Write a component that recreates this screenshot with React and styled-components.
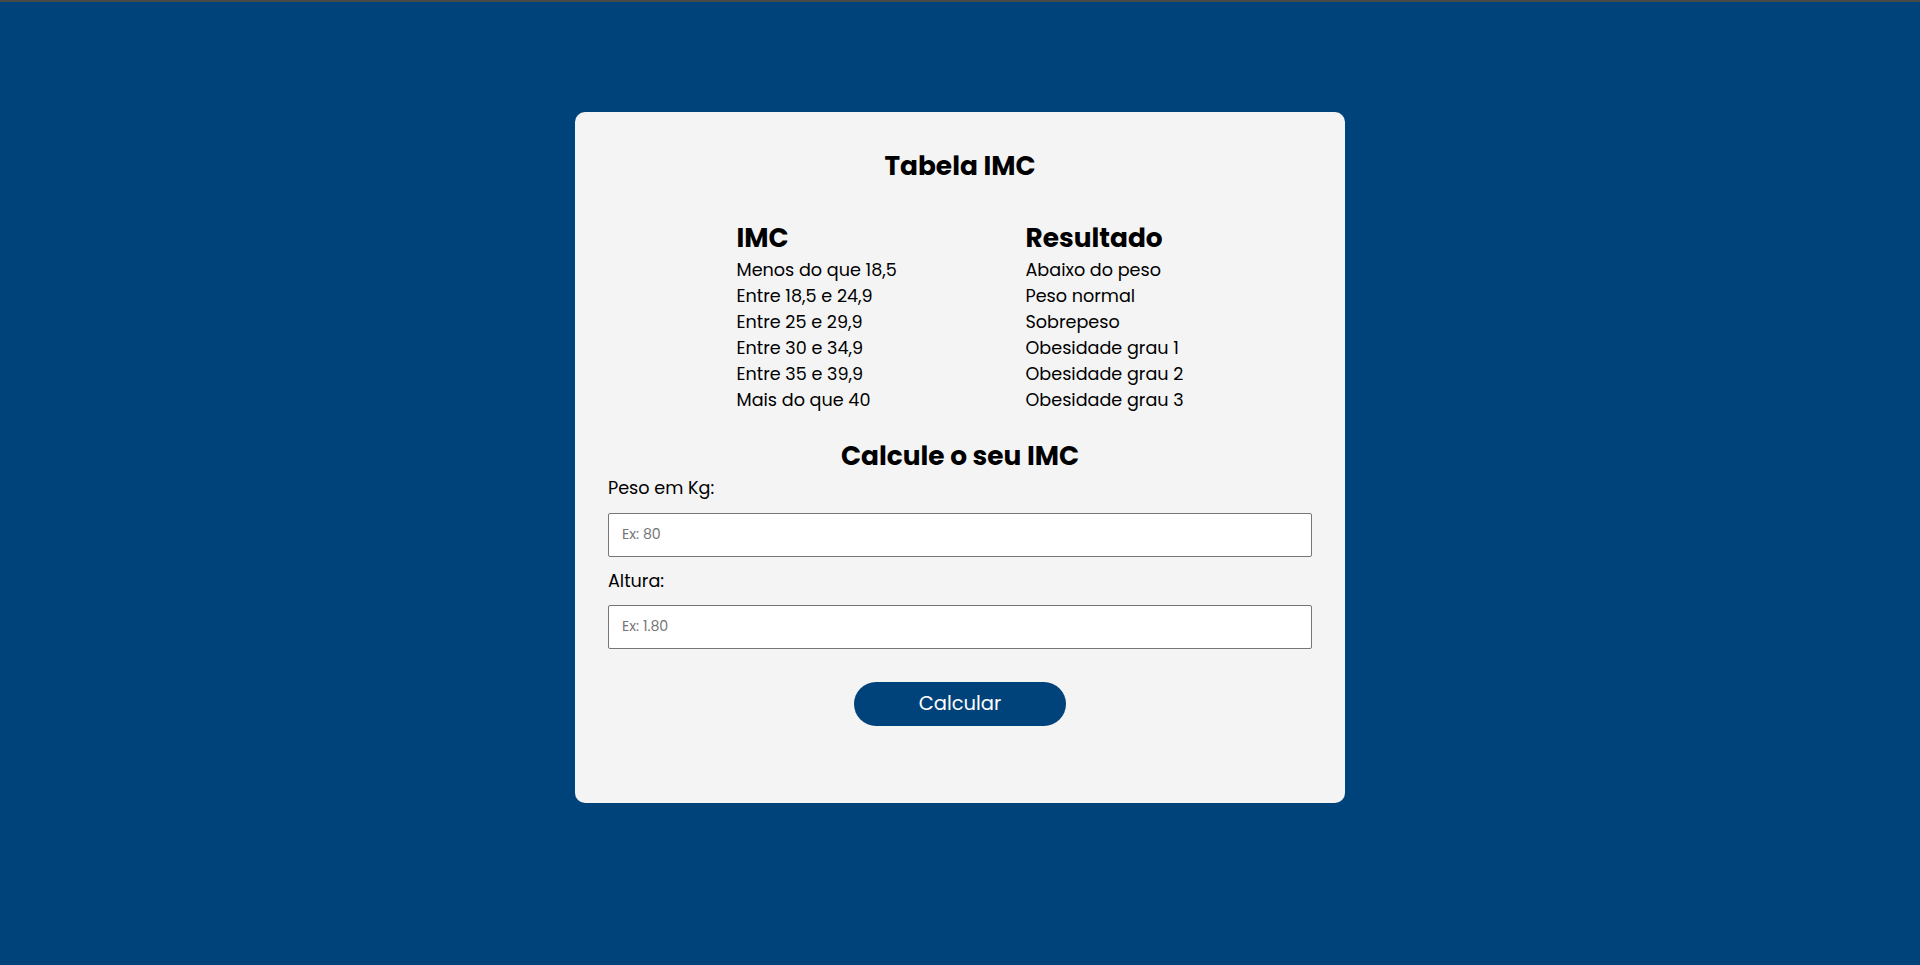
import React, { useState } from 'react';
import styled, { createGlobalStyle } from 'styled-components';

const GlobalStyle = createGlobalStyle`
  * {
    box-sizing: border-box;
  }
  body {
    margin: 0;
    min-height: 100vh;
    background-color: #00437a;
    border-top: 2px solid #4a4a4a;
    font-family: Poppins, "Open Sans", "Noto Sans", sans-serif;
    font-size: 17.6px;
    color: #000;
  }
`

const Page = styled.main`
  display: flex;
  justify-content: center;
  padding-top: 110px;
`

const Card = styled.section`
  width: 770px;
  min-height: 691px;
  background-color: #f4f4f4;
  border-radius: 10px;
  padding: 34px 33px 32px;
  display: flex;
  flex-flow: column;
`

const Title = styled.h2`
  margin: 0;
  font-size: 26.4px;
  line-height: 39.6px;
  font-weight: 700;
  text-align: center;
`

const Table = styled.div`
  display: grid;
  grid-template-columns: 289px 158px;
  justify-content: center;
  margin-top: 32px;
`

const Column = styled.div`
  display: flex;
  flex-flow: column;
`

const ColumnHead = styled.h3`
  margin: 0;
  font-size: 26.4px;
  line-height: 39.6px;
  font-weight: 700;
  white-space: nowrap;
`

const Cell = styled.span`
  font-size: 17.6px;
  line-height: 26px;
  white-space: nowrap;
`

const SubTitle = styled(Title)`
  margin-top: 22.4px;
`

const Form = styled.form`
  display: flex;
  flex-flow: column;
`

const Label = styled.label`
  font-size: 17.6px;
  line-height: 26.4px;
  margin-bottom: 11px;
`

const Input = styled.input`
  width: 100%;
  height: 44px;
  margin-bottom: 11px;
  padding: 0 13px;
  border: 1px solid #767676;
  border-radius: 2px;
  background-color: #fff;
  font-family: inherit;
  font-size: 14.2px;
  color: #000;

  &::placeholder {
    color: #757575;
  }
`

const Button = styled.button`
  align-self: center;
  width: 212px;
  height: 44px;
  margin-top: 22px;
  border: none;
  border-radius: 22px;
  background-color: #00437a;
  color: white;
  font-family: inherit;
  font-size: 19.5px;
  cursor: pointer;
`

const Result = styled.p`
  margin: 16px 0 0;
  min-height: 26px;
  font-size: 17.6px;
  text-align: center;
`

const faixas = [
  ['Menos do que 18,5', 'Abaixo do peso'],
  ['Entre 18,5 e 24,9', 'Peso normal'],
  ['Entre 25 e 29,9', 'Sobrepeso'],
  ['Entre 30 e 34,9', 'Obesidade grau 1'],
  ['Entre 35 e 39,9', 'Obesidade grau 2'],
  ['Mais do que 40', 'Obesidade grau 3'],
]

const App = () => {
  const [peso, setPeso] = useState('');
  const [altura, setAltura] = useState('');
  const [resultado, setResultado] = useState('');

  const calcular = (event) => {
    event.preventDefault()
    const p = parseFloat(peso.replace(',', '.'));
    const a = parseFloat(altura.replace(',', '.'));
    if (!p || !a) {
      setResultado('')
      return
    }
    const imc = p / (a * a);
    setResultado(`Seu IMC é ${imc.toFixed(1).replace('.', ',')}`)
  }

  return (
    <>
      <GlobalStyle />
      <Page>
        <Card>
          <Title>Tabela IMC</Title>
          <Table>
            <Column>
              <ColumnHead>IMC</ColumnHead>
              {faixas.map(item => <Cell key={item[0]}>{item[0]}</Cell>)}
            </Column>
            <Column>
              <ColumnHead>Resultado</ColumnHead>
              {faixas.map(item => <Cell key={item[1]}>{item[1]}</Cell>)}
            </Column>
          </Table>

          <SubTitle>Calcule o seu IMC</SubTitle>
          <Form onSubmit={calcular}>
            <Label htmlFor="peso">Peso em Kg:</Label>
            <Input id="peso" type="text" placeholder="Ex: 80" value={peso} onChange={e => setPeso(e.target.value)} />
            <Label htmlFor="altura">Altura:</Label>
            <Input id="altura" type="text" placeholder="Ex: 1.80" value={altura} onChange={e => setAltura(e.target.value)} />
            <Button type="submit">Calcular</Button>
            <Result>{resultado}</Result>
          </Form>
        </Card>
      </Page>
    </>
  )
}

export default App;
